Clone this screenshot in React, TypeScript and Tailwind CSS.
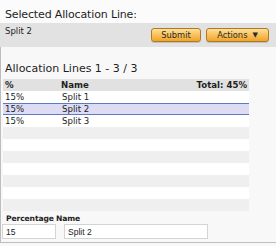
import * as React from "react";

// ─── Data ──────────────────────────────────────────────────────────────────────

interface AllocationLine {
  pct: string;
  name: string;
}

const LINES: AllocationLine[] = [
  { pct: "15%", name: "Split 1" },
  { pct: "15%", name: "Split 2" },
  { pct: "15%", name: "Split 3" },
];

const TOTAL_ROWS = 10;
const SELECTED = 1;

// ─── Button ────────────────────────────────────────────────────────────────────

function OrangeButton({
  children,
  className,
}: {
  children: React.ReactNode;
  className?: string;
}) {
  return (
    <button
      className={
        "flex h-[14px] items-center justify-center rounded-[3px] border border-[#b07a22] bg-gradient-to-b from-[#fde09a] via-[#f8c158] to-[#f0a42a] text-[8.3px] leading-none text-[#2a2a2a] shadow-[0_1px_0_rgba(0,0,0,0.15)] " +
        (className ?? "")
      }
    >
      {children}
    </button>
  );
}

// ─── App ───────────────────────────────────────────────────────────────────────

export default function App() {
  const rows = Array.from({ length: TOTAL_ROWS }, (_, i) => LINES[i]);

  return (
    <div className="h-[246px] w-[276px] overflow-hidden bg-[#f8f8f8] font-['DejaVu_Sans',sans-serif] text-[#1e1e1e]">
      {/* Title */}
      <div className="h-[23px] bg-[#fbfbfb] pl-[5px] pt-[8px] text-[11px] leading-[13px] tracking-[-0.15px]">
        Selected Allocation Line:
      </div>

      {/* Selected line band */}
      <div className="flex h-[24px] bg-[#e2e2e2] pl-[5px] pr-[7px]">
        <span className="pt-[2.5px] text-[8.5px] leading-[11px]">Split 2</span>
        <div className="ml-auto flex items-center gap-[5px]">
          <OrangeButton className="w-[50px]">Submit</OrangeButton>
          <OrangeButton className="w-[63px] gap-[5px]">
            Actions
            <span className="text-[7px] leading-none">▼</span>
          </OrangeButton>
        </div>
      </div>

      {/* Body */}
      <div className="h-[196px] border-b border-l border-[#bdbdbd] pt-[15px]">
        <div className="pl-[4px] text-[11px] leading-[13px]">
          Allocation Lines 1 - 3 / 3
        </div>

        <div className="mt-[4px] ml-[2px] w-[246px] text-[8.6px]">
          <div className="flex h-[12px] items-center bg-[#e1e1e1] px-[2px] font-bold">
            <span className="w-[56px]">%</span>
            <span>Name</span>
            <span className="ml-auto">Total: 45%</span>
          </div>
          {rows.map((line, i) => (
            <div
              key={i}
              className={
                i === SELECTED
                  ? "flex h-[12px] items-center border-y border-[#5a7cc0] bg-[#dddcf4] px-[2px]"
                  : i % 2 === 1
                  ? "flex h-[12px] items-center bg-[#efefef] px-[2px]"
                  : "flex h-[12px] items-center bg-white px-[2px]"
              }
            >
              {line && (
                <>
                  <span className="w-[57px]">{line.pct}</span>
                  <span>{line.name}</span>
                </>
              )}
            </div>
          ))}
        </div>

        {/* Edit form */}
        <div className="mt-[3px] flex h-[10px] items-center text-[7.6px] font-bold tracking-[-0.1px]">
          <span className="w-[55px] pl-[5px]">Percentage</span>
          <span>Name</span>
        </div>
        <div className="ml-[1px] flex gap-[8px] font-['Liberation_Sans',sans-serif] text-[8.5px]">
          <input
            readOnly
            value="15"
            className="h-[15px] w-[54px] border border-[#d4d4d4] bg-white px-[3px] text-[#222] outline-none"
          />
          <input
            readOnly
            value="Split 2"
            className="h-[15px] w-[144px] border border-[#d4d4d4] bg-white px-[3px] text-[#222] outline-none"
          />
        </div>
      </div>
    </div>
  );
}
